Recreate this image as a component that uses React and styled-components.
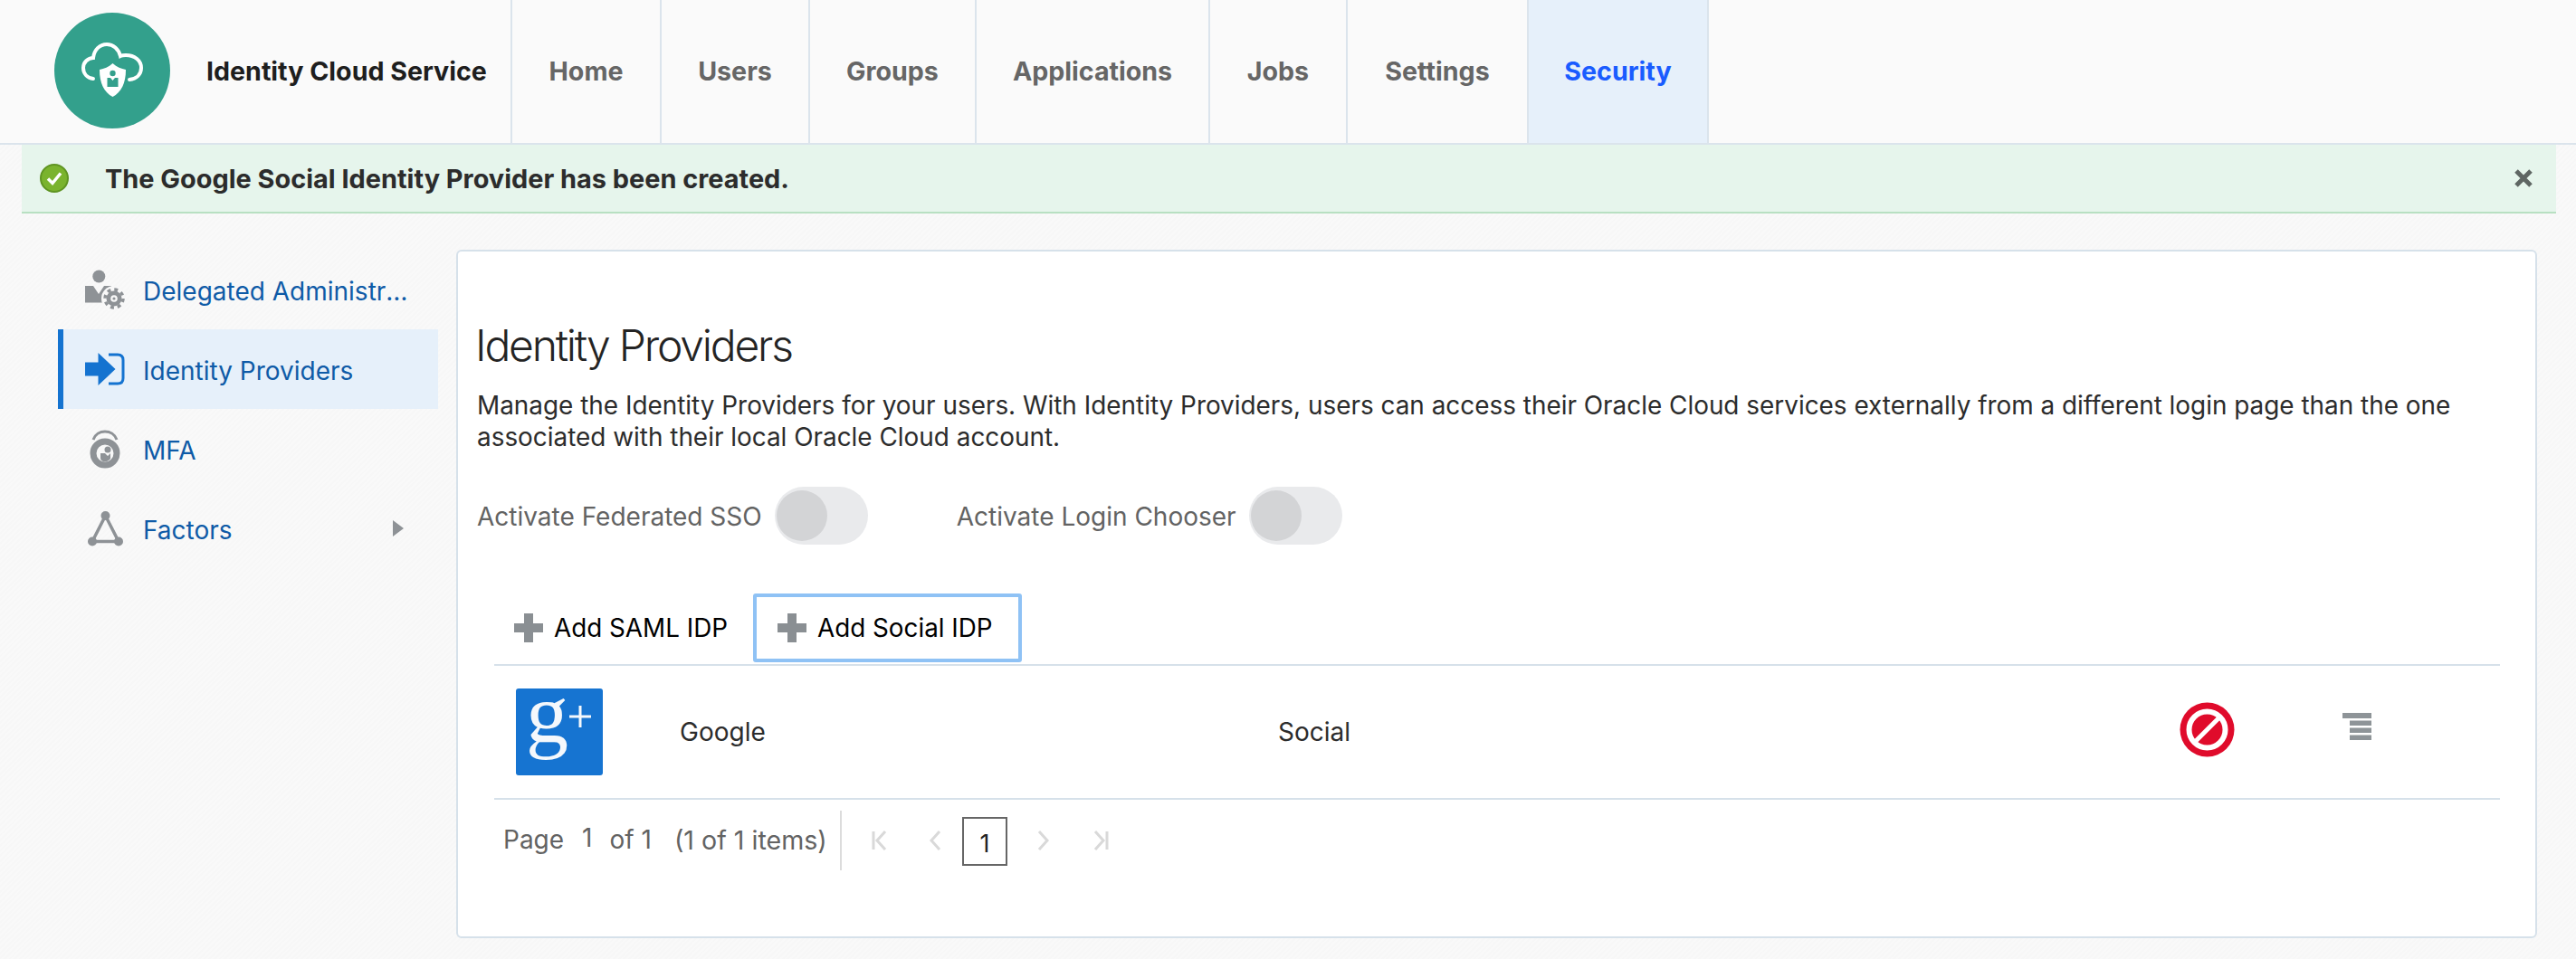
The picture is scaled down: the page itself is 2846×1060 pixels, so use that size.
import React from 'react'
import styled, { createGlobalStyle } from 'styled-components'

const GlobalStyle = createGlobalStyle`
  html, body {
    margin: 0;
    padding: 0;
  }
  body {
    font-family: Inter, 'Liberation Sans', sans-serif;
    background: repeating-linear-gradient(135deg, #f7f7f7 0 2px, #f9f9f9 2px 4px);
    color: #2c2c2c;
  }
`

const Header = styled.header`
  display: flex;
  height: 158px;
  padding-left: 60px;
  background: #fafafa;
  border-bottom: 2px solid #dbe4ec;
`

const Logo = styled.svg`
  width: 128px;
  height: 128px;
  margin-top: 14px;
  flex: none;
`

const Brand = styled.div`
  width: 376px;
  padding-left: 40px;
  box-sizing: border-box;
  line-height: 158px;
  font-size: 28.6px;
  font-weight: 700;
  color: #1e1e1e;
  white-space: nowrap;
`

const Nav = styled.nav`
  display: flex;
  border-right: 2px solid #dbe4ec;
`

const NavItem = styled.a`
  width: ${p => p.$width}px;
  box-sizing: border-box;
  text-align: center;
  border-left: 2px solid #dbe4ec;
  line-height: 158px;
  font-size: 28.6px;
  font-weight: 700;
  color: ${p => (p.$active ? '#1a5cff' : '#666666')};
  background: ${p => (p.$active ? '#e6f0fa' : 'transparent')};
`

const Banner = styled.div`
  display: flex;
  align-items: center;
  height: 74px;
  margin: 0 22px 0 24px;
  padding: 0 26px 0 20px;
  background: #e6f5ec;
  border-bottom: 2px solid #b8e0c2;
  font-size: 28.9px;
  font-weight: 700;
  color: #2c2c2c;

  .text {
    margin-left: 40px;
    padding-top: 1px;
    flex: 1;
  }
`

const Main = styled.main`
  display: flex;
  align-items: flex-start;
  margin-top: 40px;
  padding: 0 43px 23px 64px;
`

const Sidebar = styled.aside`
  width: 420px;
  flex: none;
  margin-right: 20px;
`

const SideItem = styled.a`
  display: flex;
  align-items: center;
  height: 88px;
  box-sizing: border-box;
  padding-left: ${p => (p.$active ? '24px' : '30px')};
  border-left: ${p => (p.$active ? '6px solid #1473d0' : '0')};
  background: ${p => (p.$active ? '#e6f0fa' : 'transparent')};
  font-size: 28px;
  color: #0f5ba7;
`

const SideIcon = styled.span`
  display: flex;
  justify-content: center;
  width: 44px;
  margin-right: 20px;
  flex: none;
`

const SideLabel = styled.span`
  max-width: 296px;
  padding-top: 3px;
  overflow: hidden;
  white-space: nowrap;
  text-overflow: ellipsis;
`

const Caret = styled.svg`
  margin-left: auto;
  margin-right: 38px;
`

const Panel = styled.section`
  width: 2299px;
  height: 761px;
  box-sizing: border-box;
  padding-top: 75px;
  background: #ffffff;
  border: 2px solid #d6e1ea;
  border-radius: 6px;
`

const Heading = styled.h1`
  margin: 0 0 20px 19px;
  font-size: 48px;
  line-height: 58px;
  font-weight: 300;
  letter-spacing: -2.2px;
  color: #242424;
`

const Intro = styled.p`
  margin: 0 0 37px 21px;
  max-width: 2200px;
  font-size: 27.9px;
  line-height: 35px;
  color: #2c2c2c;
`

const ToggleRow = styled.div`
  display: flex;
  align-items: center;
  height: 64px;
  margin: 0 0 54px 21px;
`

const ToggleLabel = styled.span`
  padding-top: 2px;
  font-size: 28px;
  color: #636363;
  margin-right: 14px;
`

const Toggle = styled.span`
  display: flex;
  align-items: center;
  width: 103px;
  height: 64px;
  padding-left: 2px;
  box-sizing: border-box;
  margin-right: 98px;
  background: #e9eaec;
  border-radius: 32px;

  &::before {
    content: '';
    width: 56px;
    height: 56px;
    border-radius: 50%;
    background: #d3d4d6;
  }
`

const Toolbar = styled.div`
  display: flex;
  height: 76px;
  margin: 0 0 2px 35px;
`

const AddButton = styled.button`
  display: flex;
  align-items: center;
  gap: 12px;
  height: 76px;
  box-sizing: border-box;
  padding: 0 ${p => (p.$focused ? '28px' : '24px')} 0 23px;
  background: #ffffff;
  border: 4px solid ${p => (p.$focused ? '#8fc2f5' : 'transparent')};
  border-radius: 3px;
  font-family: inherit;
  font-size: 27.8px;
  color: #000000;
`

const Table = styled.div`
  margin: 0 39px 0 40px;
  border-top: 2px solid #d6e1ea;
`

const Row = styled.div`
  display: grid;
  grid-template-columns: 181px 661px 996px 180px 1fr;
  align-items: center;
  height: 146px;
  padding-left: 24px;
  border-bottom: 2px solid #d6e1ea;
  font-size: 28px;
  color: #2c2c2c;
`

const RowIcon = styled.svg`
  display: block;
  margin-bottom: ${p => p.$lift || 0}px;
`

const Pager = styled.div`
  display: flex;
  align-items: center;
  height: 66px;
  margin-top: 12px;
  padding-left: 10px;
  font-size: 28px;
  color: #636363;
`

const PagerInfo = styled.div`
  display: flex;
  width: 374px;
  height: 66px;
  padding-bottom: 2px;
  align-items: center;
  border-right: 2px solid #dcdcdc;
  box-sizing: border-box;
  white-space: nowrap;
`

const PageNum = styled.span`
  margin: -4px 19px 0 20px;
`

const ItemCount = styled.span`
  margin-left: 25px;
  font-size: 28.6px;
`

const PagerIcon = styled.svg`
  margin-left: ${p => p.$gap}px;
  fill: none;
  stroke: #d9d9d9;
  stroke-width: 3;
`

const PageBox = styled.span`
  display: flex;
  align-items: center;
  justify-content: center;
  width: 50px;
  height: 54px;
  margin: 2px 0 0 23px;
  padding-top: 4px;
  box-sizing: border-box;
  border: 2px solid #666666;
  font-size: 27px;
  color: #222222;
`

const GRAY = '#8e9296'

const PlusIcon = () => (
  <svg width="32" height="32" viewBox="0 0 32 32" fill="#8a8f93">
    <path d="M11 0h10v11h11v10H21v11H11V21H0V11h11z" />
  </svg>
)

const DelegatedIcon = () => (
  <svg width="44" height="44" viewBox="0 0 44 44">
    <circle cx="15.3" cy="7.5" r="7" fill={GRAY} />
    <path d="M0 18h9l6 9 6-9h8v18.500H0z" fill={GRAY} />
    <circle cx="32" cy="32" r="14" fill="#f8f8f8" />
    <circle cx="32" cy="32" r="8.500" fill={GRAY} />
    <circle cx="32" cy="32" r="10" fill="none" stroke={GRAY} strokeWidth="3.500" strokeDasharray="3.900 3.950" />
    <circle cx="32" cy="32" r="3.800" fill="#f8f8f8" />
    <circle cx="32" cy="32" r="1.600" fill={GRAY} />
  </svg>
)

const ProvidersIcon = () => (
  <svg width="44" height="36" viewBox="0 0 44 36">
    <path d="M0 10.500h14.500V0l19 18-19 18V25.500H0z" fill="#1473d0" />
    <path d="M26 2h10q6 0 6 6v20q0 6-6 6H26" fill="none" stroke="#1473d0" strokeWidth="3" />
  </svg>
)

const MfaIcon = () => (
  <svg width="34" height="44" viewBox="0 0 34 44">
    <path d="M4 12C8 0 26 0 30 12" fill="none" stroke={GRAY} strokeWidth="3" />
    <circle cx="17" cy="27" r="13" fill="#f8f8f8" stroke={GRAY} strokeWidth="7" />
    <circle cx="20" cy="23" r="3.500" fill={GRAY} />
    <path d="M12 27h5l3 3 3-3v6q-3 4-8 3-3-1-3-4z" fill={GRAY} />
  </svg>
)

const FactorsIcon = () => (
  <svg width="39" height="39" viewBox="0 0 39 39">
    <path d="M19.500 5 5 33.500h29z" fill="none" stroke={GRAY} strokeWidth="3.500" />
    <circle cx="19.500" cy="5" r="5" fill={GRAY} />
    <circle cx="5" cy="33.500" r="5" fill={GRAY} />
    <circle cx="34" cy="33.500" r="5" fill={GRAY} />
  </svg>
)

const tabs = [
  { name: 'Home', width: 165 },
  { name: 'Users', width: 164 },
  { name: 'Groups', width: 184 },
  { name: 'Applications', width: 258 },
  { name: 'Jobs', width: 152 },
  { name: 'Settings', width: 200 },
  { name: 'Security', width: 199, active: true },
]

const App = () => {
  return (
    <>
      <GlobalStyle />
      <Header>
        <Logo viewBox="0 0 128 128">
          <circle cx="64" cy="64" r="64" fill="#33a08c" />
          <path
            d="M43 73C36 72 32 67 32 61C32 55 37 50 43 50C44 41 50 35 58 35C65 35 71 40 73 48C75 47 77 47 79 47C89 47 96 53 96 61C96 68 91 73 83 74"
            fill="none"
            stroke="#fff"
            strokeWidth="4"
            strokeLinecap="round"
          />
          <path d="M64.500 56C60 60 55 62 50 63C50 78 55 88 64.500 93C74 88 79 78 79 63C74 62 69 60 64.500 56Z" fill="#33a08c" stroke="#33a08c" strokeWidth="3" />
          <path d="M64.500 56C60 60 55 62 50 63C50 78 55 88 64.500 93C74 88 79 78 79 63C74 62 69 60 64.500 56Z" fill="#fff" />
          <circle cx="64.500" cy="67" r="3.200" fill="#33a08c" />
          <path d="M58.500 72h3.500l2.500 3 2.500-3h3.500v10h-12z" fill="#33a08c" />
        </Logo>
        <Brand>Identity Cloud Service</Brand>
        <Nav>
          {tabs.map(t => (
            <NavItem key={t.name} $width={t.width} $active={t.active}>{t.name}</NavItem>
          ))}
        </Nav>
      </Header>

      <Banner>
        <svg width="32" height="32" viewBox="0 0 32 32">
          <circle cx="16" cy="16" r="15" fill="#7ab32e" stroke="#5f9422" strokeWidth="2" />
          <path d="M9 16.500l5 5 9-11" fill="none" stroke="#fff" strokeWidth="3.500" />
        </svg>
        <span className="text">The Google Social Identity Provider has been created.</span>
        <svg width="20" height="20" viewBox="0 0 20 20">
          <path d="M2 2l16 16M18 2L2 18" stroke="#5f6663" strokeWidth="5" />
        </svg>
      </Banner>

      <Main>
        <Sidebar>
          <SideItem>
            <SideIcon><DelegatedIcon /></SideIcon>
            <SideLabel>Delegated Administration</SideLabel>
          </SideItem>
          <SideItem $active>
            <SideIcon><ProvidersIcon /></SideIcon>
            <SideLabel>Identity Providers</SideLabel>
          </SideItem>
          <SideItem>
            <SideIcon><MfaIcon /></SideIcon>
            <SideLabel>MFA</SideLabel>
          </SideItem>
          <SideItem>
            <SideIcon><FactorsIcon /></SideIcon>
            <SideLabel>Factors</SideLabel>
            <Caret width="12" height="18" viewBox="0 0 12 18">
              <path d="M0 0l12 9L0 18z" fill={GRAY} />
            </Caret>
          </SideItem>
        </Sidebar>

        <Panel>
          <Heading>Identity Providers</Heading>
          <Intro>
            Manage the Identity Providers for your users. With Identity Providers, users can access their Oracle Cloud services externally from a different login page than the one associated with their local Oracle Cloud account.
          </Intro>

          <ToggleRow>
            <ToggleLabel>Activate Federated SSO</ToggleLabel>
            <Toggle />
            <ToggleLabel>Activate Login Chooser</ToggleLabel>
            <Toggle />
          </ToggleRow>

          <Toolbar>
            <AddButton><PlusIcon />Add SAML IDP</AddButton>
            <AddButton $focused><PlusIcon />Add Social IDP</AddButton>
          </Toolbar>

          <Table>
            <Row>
              <svg width="96" height="96" viewBox="0 0 96 96">
                <rect width="96" height="96" rx="3" fill="#1674d1" />
                <text x="11" y="59" fontFamily="'Liberation Serif', serif" fontSize="94" fill="#f4f8fc">g</text>
                <path d="M59 31h24M71 19v24" stroke="#f4f8fc" strokeWidth="3" />
              </svg>
              <span>Google</span>
              <span>Social</span>
              <RowIcon $lift={5} width="61" height="61" viewBox="0 0 61 61">
                <circle cx="30.500" cy="30.500" r="30" fill="#e00b2b" />
                <circle cx="30.500" cy="30.500" r="20" fill="none" stroke="#fff" strokeWidth="6" />
                <path d="M17 44L44 17" stroke="#fff" strokeWidth="5" />
              </RowIcon>
              <RowIcon $lift={12} width="32" height="30" viewBox="0 0 32 30" fill="#8e9498">
                <rect width="32" height="6" />
                <rect x="8" y="8.500" width="24" height="5.500" />
                <rect x="8" y="16.500" width="24" height="5.500" />
                <rect x="8" y="24.500" width="24" height="5.500" />
              </RowIcon>
            </Row>
            <Pager>
              <PagerInfo>
                <span>Page</span>
                <PageNum>1</PageNum>
                <span>of 1</span>
                <ItemCount>(1 of 1 items)</ItemCount>
              </PagerInfo>
              <PagerIcon $gap={33} width="17" height="22" viewBox="0 0 17 22">
                <path d="M2 1v20M15 1L6 11l9 10" />
              </PagerIcon>
              <PagerIcon $gap={47} width="13" height="22" viewBox="0 0 13 22">
                <path d="M11 1L2 11l9 10" />
              </PagerIcon>
              <PageBox>1</PageBox>
              <PagerIcon $gap={33} width="13" height="22" viewBox="0 0 13 22">
                <path d="M2 1l9 10-9 10" />
              </PagerIcon>
              <PagerIcon $gap={49} width="17" height="22" viewBox="0 0 17 22">
                <path d="M2 1l9 10-9 10M15 1v20" />
              </PagerIcon>
            </Pager>
          </Table>
        </Panel>
      </Main>
    </>
  )
}

export default App
